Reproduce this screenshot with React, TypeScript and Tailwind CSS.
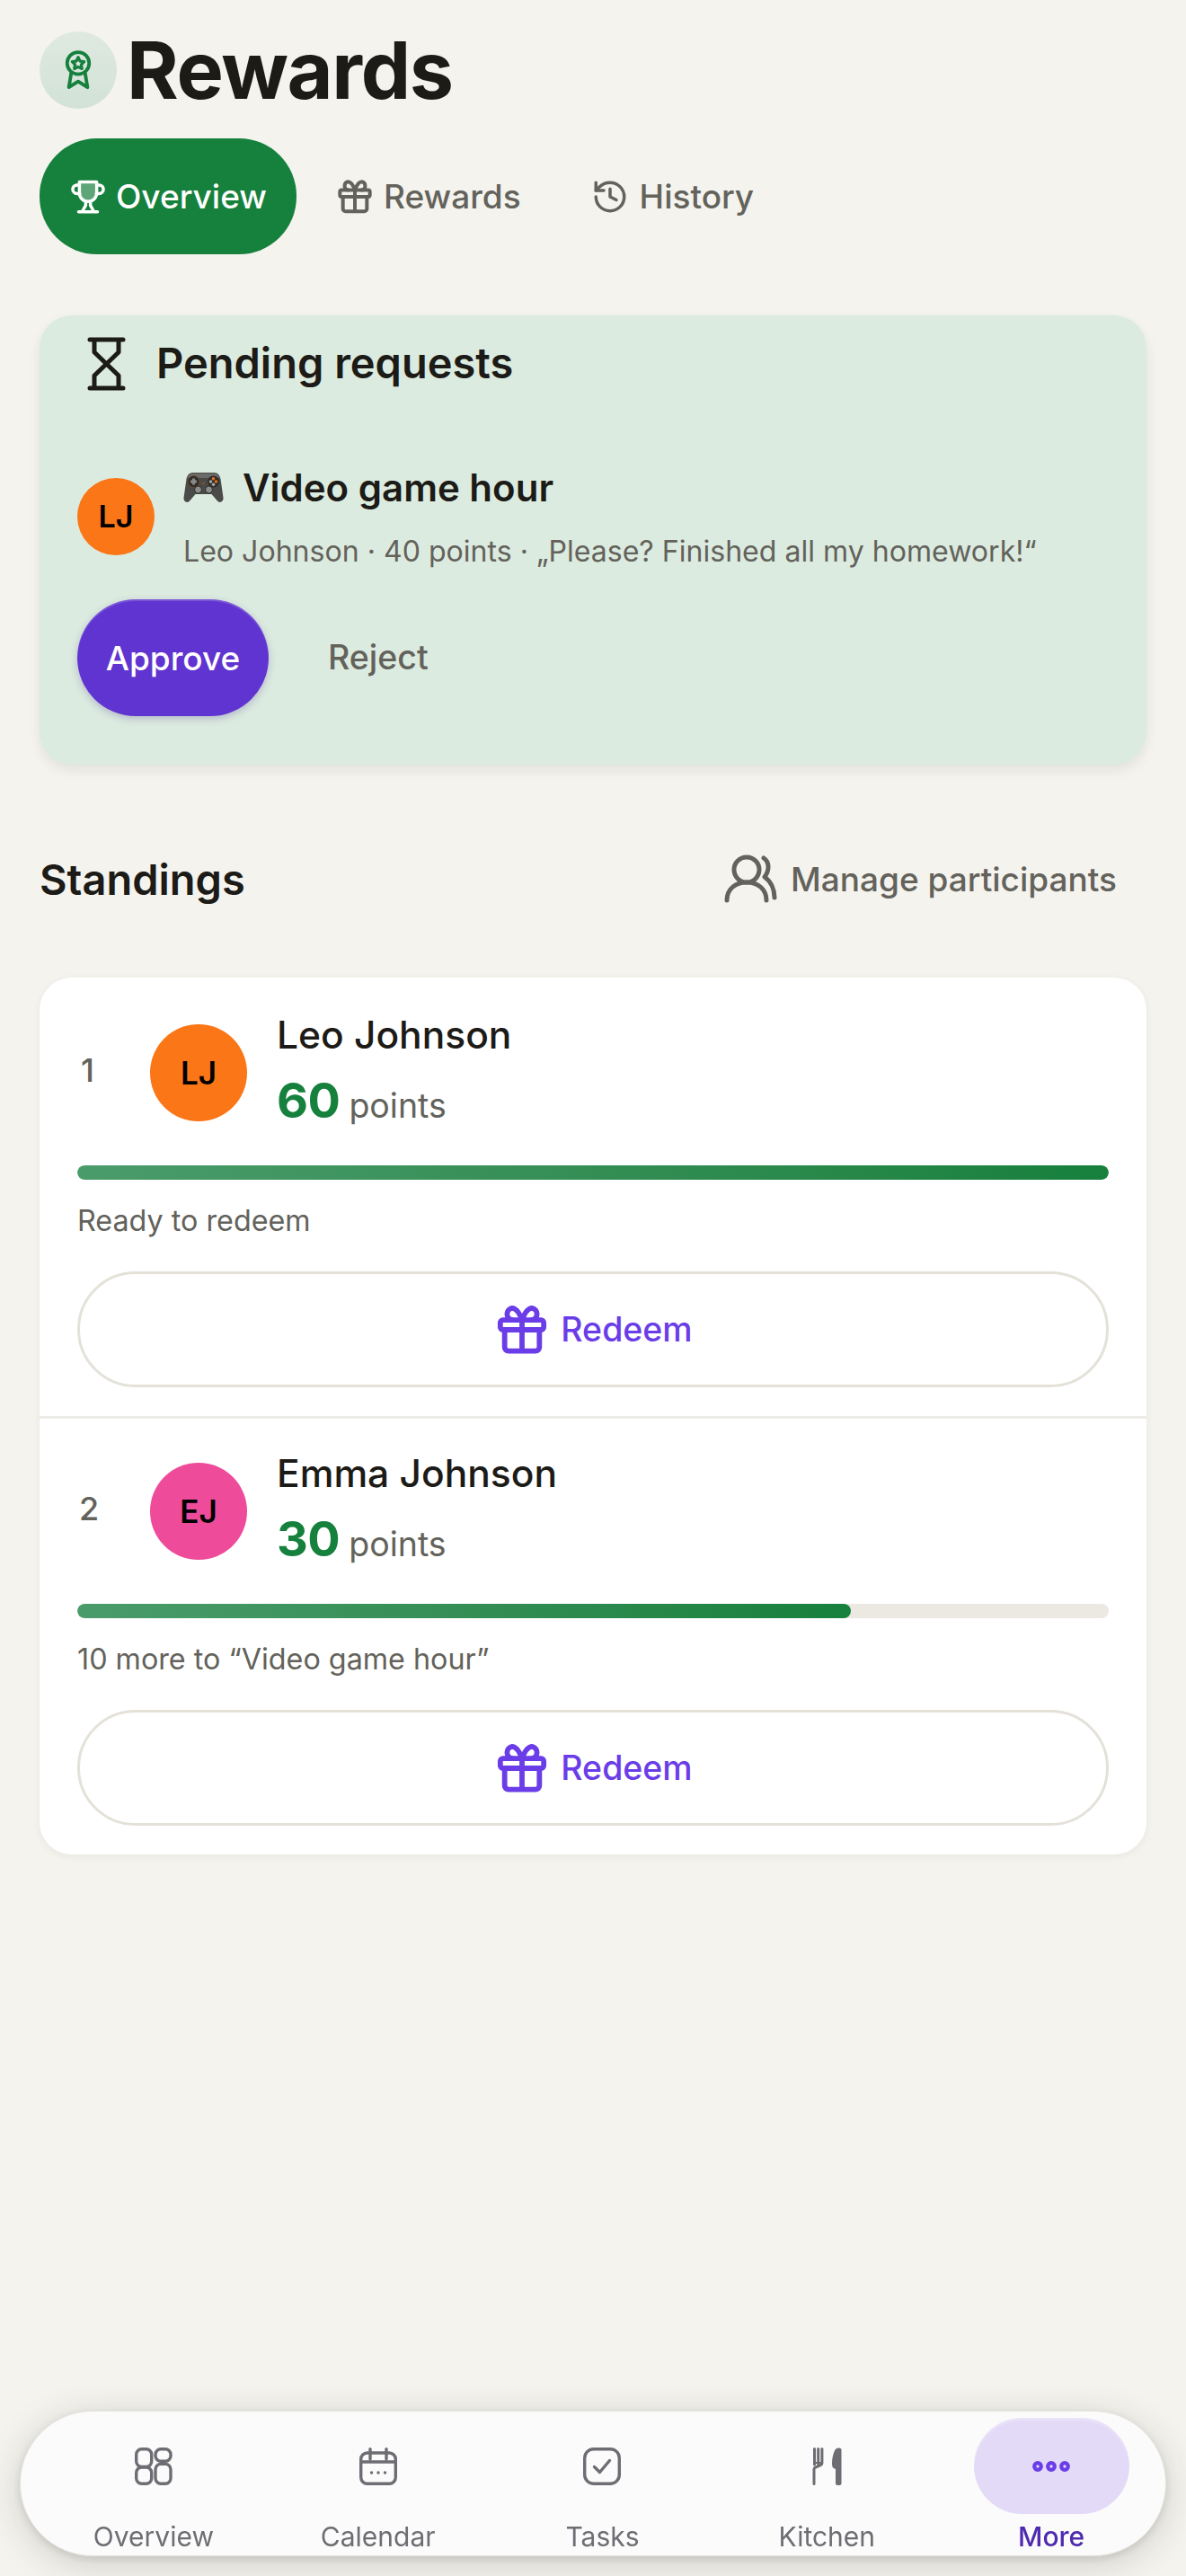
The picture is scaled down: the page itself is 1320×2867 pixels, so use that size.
import React from "react";

type IconProps = { className?: string };

function Award({ className }: IconProps) {
  return (
    <svg viewBox="0 0 24 24" fill="none" stroke="currentColor" strokeWidth="2" strokeLinecap="round" strokeLinejoin="round" className={className}>
      <circle cx="12" cy="8" r="6.4" />
      <path d="M12 4.6l1.1 2.2 2.4.3-1.700 1.700.4 2.400-2.200-1.100-2.200 1.100.4-2.400-1.700-1.700 2.400-.3z" strokeWidth="1.7" />
      <path d="M8 13.500L6.600 22 12 18.600 17.400 22 16 13.500" />
    </svg>
  );
}

function Trophy({ className }: IconProps) {
  return (
    <svg viewBox="0 0 24 24" fill="none" stroke="currentColor" strokeWidth="2" strokeLinecap="round" strokeLinejoin="round" className={className}>
      <path d="M6.500 2.500h11v7a5.500 5.500 0 0 1-11 0z" fill="currentColor" fillOpacity="0.3" />
      <path d="M6.500 4.500H5a2.500 2.500 0 0 0 0 5.500h1.700M17.500 4.500H19a2.500 2.500 0 0 1 0 5.500h-1.700" />
      <path d="M10.500 15v2.500L8.500 21M13.500 15v2.500l2 3.500M6 21.500h12" />
    </svg>
  );
}

function Gift({ className }: IconProps) {
  return (
    <svg viewBox="0 0 24 24" fill="none" stroke="currentColor" strokeWidth="2.4" strokeLinecap="round" strokeLinejoin="round" className={className}>
      <rect x="2" y="7.500" width="20" height="4.500" rx="1.200" />
      <path d="M4 12v8a1.800 1.800 0 0 0 1.800 1.800h12.400a1.800 1.800 0 0 0 1.800-1.800v-8M12 7.500v14.300" />
      <path d="M12 7.500C10.500 3.500 9 2 7.400 2a2.800 2.800 0 0 0 0 5.500M12 7.500C13.500 3.500 15 2 16.600 2a2.800 2.800 0 0 1 0 5.500" />
    </svg>
  );
}

function History({ className }: IconProps) {
  return (
    <svg viewBox="0 0 24 24" fill="none" stroke="currentColor" strokeWidth="2" strokeLinecap="round" strokeLinejoin="round" className={className}>
      <path d="M3 12a9 9 0 1 0 9-9 9.750 9.750 0 0 0-6.740 2.740L3 8" />
      <path d="M3 3v5h5" />
      <path d="M12 7v5l4 2" />
    </svg>
  );
}

function Hourglass({ className }: IconProps) {
  return (
    <svg viewBox="0 0 43 60" fill="none" stroke="currentColor" strokeWidth="5" strokeLinecap="round" strokeLinejoin="round" className={className}>
      <path d="M3 3h37M3 57h37" />
      <path d="M8 3v14l13.500 13L35 43v14M35 3v14L21.500 30 8 43v14" strokeLinecap="butt" />
    </svg>
  );
}

function Users({ className }: IconProps) {
  return (
    <svg viewBox="0 0 60 54" fill="none" stroke="currentColor" strokeWidth="5" strokeLinecap="round" strokeLinejoin="round" className={className}>
      <circle cx="25" cy="17" r="14" />
      <path d="M3 51c0-12 9-20 22-20s22 8 22 20" />
      <path d="M44 4c6 4 7 13 1 21 7 5 11 14 11 23" />
    </svg>
  );
}

function GridNav({ className }: IconProps) {
  return (
    <svg viewBox="0 0 42 42" fill="none" stroke="currentColor" strokeWidth="3.400" className={className}>
      <rect x="1.700" y="1.700" width="17" height="19.800" rx="6" />
      <rect x="1.700" y="22" width="17" height="18.300" rx="6" />
      <rect x="23" y="1.700" width="17" height="13.500" rx="6" />
      <rect x="23" y="18.400" width="17" height="21.900" rx="6" />
    </svg>
  );
}

function CalendarNav({ className }: IconProps) {
  return (
    <svg viewBox="0 0 42 42" fill="none" stroke="currentColor" strokeWidth="3.400" strokeLinecap="round" className={className}>
      <rect x="1.700" y="6" width="38.600" height="34.300" rx="7" />
      <path d="M1.700 16h38.600M12 1.700v11M30 1.700v11" />
      <path d="M13.500 28h.1M21 28h.1M28.500 28h.1" strokeWidth="3.400" />
    </svg>
  );
}

function TaskNav({ className }: IconProps) {
  return (
    <svg viewBox="0 0 42 42" fill="none" stroke="currentColor" strokeWidth="3.400" strokeLinecap="round" strokeLinejoin="round" className={className}>
      <rect x="1.700" y="1.700" width="38.600" height="38.600" rx="10" />
      <path d="M12.500 21.500l6 6 11-13" />
    </svg>
  );
}

function KitchenNav({ className }: IconProps) {
  return (
    <svg viewBox="0 0 33 42" fill="none" stroke="currentColor" strokeWidth="3" strokeLinecap="round" className={className}>
      <path d="M2.500 1.500V19M6.700 1.500V19M10.900 1.500V17.500a2 2 0 0 1-1.200 1.800l-6.500 3a2 2 0 0 0-1.200 1.800V40.500" />
      <path d="M2.500 16h8.400v2H2.500z" fill="currentColor" stroke="none" />
      <path d="M27 1c2.500-1 5.500-.6 5.500 1.500V40a2 2 0 0 1-2 2H28a2 2 0 0 1-2-2V24c-2.800-.6-4-2.500-4-5.500 0-7 2-15.500 5-17.500z" fill="currentColor" stroke="none" />
    </svg>
  );
}

function DotsNav({ className }: IconProps) {
  return (
    <svg viewBox="0 0 42 14" fill="none" stroke="currentColor" strokeWidth="4.200" className={className}>
      <circle cx="6" cy="7" r="3.800" />
      <circle cx="21" cy="7" r="3.800" />
      <circle cx="36" cy="7" r="3.800" />
    </svg>
  );
}

function Gamepad({ className }: IconProps) {
  return (
    <svg viewBox="0 0 44 36" className={className}>
      <path d="M10 1h24c4 0 6 3 7 7l3 21c.4 4-4 7-7 3l-6-7H13l-6 7c-3 4-7.400 1-7-3L3 8c1-4 3-7 7-7z" fill="#4a4a48" />
      <path d="M10 2h24c3 0 5 2 6 5H4c1-3 3-5 6-5z" fill="#6b6b69" />
      <circle cx="11" cy="11" r="6.500" fill="#2d2d2c" stroke="#7b4a22" strokeWidth="0.8" />
      <path d="M9.500 7.500h3v2h2v3h-2v2h-3v-2h-2v-3h2z" fill="#8a8a88" />
      <circle cx="33" cy="11" r="6.500" fill="#2d2d2c" />
      <circle cx="33" cy="7.800" r="1.800" fill="#e8701a" />
      <circle cx="36" cy="11" r="1.800" fill="#e8701a" />
      <circle cx="30" cy="11" r="1.800" fill="#a5a5a3" />
      <circle cx="33" cy="14.200" r="1.800" fill="#a5a5a3" />
      <circle cx="16" cy="20" r="4" fill="#8c8c8a" stroke="#2d2d2c" />
      <circle cx="28" cy="20" r="4" fill="#8c8c8a" stroke="#2d2d2c" />
      <circle cx="22" cy="13" r="1" fill="#b5581a" />
    </svg>
  );
}

function Tab({ icon, label, active }: { icon: React.ReactNode; label: string; active?: boolean }) {
  return (
    <div className={active ? "mr-[6px] flex h-[129px] items-center gap-[10px] rounded-[64px] bg-[#16803d] pl-[33px] pr-[33px] text-white" : "flex h-[129px] items-center gap-[12px] px-[39px] text-[#63625b]"}>
      {icon}
      <span className="text-[37px] font-medium leading-none">{label}</span>
    </div>
  );
}

function Avatar({ initials, color, size }: { initials: string; color: string; size: "sm" | "lg" }) {
  return (
    <div className={`${size === "sm" ? "h-[86px] w-[86px] text-[34px]" : "h-[108px] w-[108px] text-[35px]"} ${color} flex shrink-0 items-center justify-center rounded-full font-semibold leading-none text-black`}>
      {initials}
    </div>
  );
}

function Standing({ rank, initials, color, name, points, width, note, rankClass }: { rank: string; initials: string; color: string; name: string; points: string; width: string; note: string; rankClass: string }) {
  return (
    <div className="px-[42px]">
      <div className="flex items-start">
        <div className={`${rankClass} flex h-[104px] items-center text-[36px] font-medium leading-none text-[#63625b]`}>{rank}</div>
        <div className="pt-[1px]"><Avatar initials={initials} color={color} size="lg" /></div>
        <div className="ml-[33px] -mt-[17px]">
          <div className="flex h-[60px] items-center text-[42.500px] font-medium leading-none text-[#1c1b17]">{name}</div>
          <div className="mt-[7px] flex h-[72px] items-baseline gap-[10px]">
            <span className="text-[54px] font-bold leading-[72px] tracking-[-0.01em] text-[#16803d]">{points}</span>
            <span className="text-[37.500px] leading-none text-[#63625b]">points</span>
          </div>
        </div>
      </div>
      <div className="mt-[36px] h-[16px] overflow-hidden rounded-full bg-[#ebe9e2]">
        <div className={`${width} h-full rounded-full bg-gradient-to-r from-[#4a9c6b] to-[#16803d]`} />
      </div>
      <div className="mt-[28px] flex h-[36px] items-center text-[32.300px] leading-none text-[#63625b]">{note}</div>
      <div className="mt-[38px] flex h-[129px] items-center justify-center gap-[14px] rounded-[65px] border-[3px] border-[#e4e1d9] pl-[3px] text-[#6a3de8]">
        <Gift className="h-[58px] w-[58px]" />
        <span className="text-[37.500px] font-medium leading-none">Redeem</span>
      </div>
    </div>
  );
}

function NavItem({ icon, label, active }: { icon: React.ReactNode; label: string; active?: boolean }) {
  return (
    <div className="flex flex-1 flex-col items-center">
      <div className={active ? "flex h-[107px] w-[173px] items-center justify-center rounded-[54px] bg-[#e3daf7] text-[#6a3de8] shadow-[inset_0_3px_2px_rgba(255,255,255,0.25)]" : "flex h-[107px] w-[173px] items-center justify-center text-[#6d6d73]"}>
        {icon}
      </div>
      <span className={active ? "mt-[7px] text-[30px] font-medium leading-[36px] text-[#4f2ab0]" : "mt-[7px] text-[30px] leading-[36px] text-[#6d6d73]"}>{label}</span>
    </div>
  );
}

export default function App() {
  return (
    <div className="relative min-h-[2867px] bg-[#f4f3ee] font-['Inter',sans-serif]">
      <div className="px-[44px] pt-[35px]">
        <header className="flex items-center gap-[11px]">
          <div className="flex h-[86px] w-[86px] items-center justify-center rounded-full bg-gradient-to-b from-[#dfe9e1] to-[#d2e2d6] text-[#16803d]">
            <Award className="h-[46px] w-[46px]" />
          </div>
          <h1 className="text-[88px] font-bold leading-[86px] tracking-[-0.015em] text-[#1c1b17]">Rewards</h1>
        </header>

        <nav className="mt-[33px] flex items-center">
          <Tab active label="Overview" icon={<Trophy className="h-[42px] w-[42px]" />} />
          <Tab label="Rewards" icon={<Gift className="h-[40px] w-[40px]" />} />
          <Tab label="History" icon={<History className="h-[42px] w-[42px]" />} />
        </nav>

        <section className="mt-[68px] h-[500px] rounded-[36px] bg-[#dcebe0] pl-[42px] pr-[42px] shadow-[0_6px_14px_rgba(30,30,20,0.08)]">
          <div className="flex items-center pl-[11px] pt-[24px]">
            <Hourglass className="h-[60px] w-[43px] text-[#1c1b17]" />
            <h2 className="-mt-[4px] ml-[34px] text-[47px] font-semibold leading-none text-[#1c1b17]">Pending requests</h2>
          </div>
          <div className="mt-[78px] flex items-start">
            <div className="mt-[19px]"><Avatar initials="LJ" color="bg-[#fb7617]" size="sm" /></div>
            <div className="ml-[32px]">
              <div className="flex h-[60px] items-center gap-[21px]">
                <Gamepad className="h-[36px] w-[45px]" />
                <span className="text-[42px] font-semibold leading-none text-[#1c1b17]">Video game hour</span>
              </div>
              <div className="mt-[21px] text-[32.100px] leading-[40px] text-[#63625b]">Leo Johnson · 40 points · „Please? Finished all my homework!“</div>
            </div>
          </div>
          <div className="mt-[33px] flex items-center">
            <div className="flex h-[130px] w-[213px] items-center justify-center rounded-[65px] bg-[#6034d0] text-[37px] font-medium leading-none text-white shadow-[0_3px_8px_rgba(60,30,140,0.25),inset_0_2px_1px_rgba(255,255,255,0.18)]">Approve</div>
            <div className="ml-[66px] text-[37.500px] font-medium leading-none text-[#63625b]">Reject</div>
          </div>
        </section>

        <div className="mt-[91px] flex h-[72px] items-center justify-between pr-[33px]">
          <h2 className="text-[47px] font-semibold leading-none text-[#1c1b17]">Standings</h2>
          <div className="flex items-center gap-[14px] text-[#63625b]">
            <Users className="h-[54px] w-[60px]" />
            <span className="text-[37px] font-medium leading-none">Manage participants</span>
          </div>
        </div>

        <section className="mt-[74px] rounded-[36px] bg-white pt-[51px] pb-[32px] shadow-[0_2px_8px_rgba(30,30,20,0.06)]">
          <Standing rank="1" rankClass="w-[81px] pl-[4px]" initials="LJ" color="bg-[#fb7617]" name="Leo Johnson" points="60" width="w-full" note="Ready to redeem" />
          <div className="mt-[32px] mb-[48px] h-[3px] bg-[#eeece6]" />
          <Standing rank="2" rankClass="w-[81px] pl-[2px]" initials="EJ" color="bg-[#ee4b9b]" name="Emma Johnson" points="30" width="w-[75%]" note="10 more to “Video game hour”" />
        </section>
      </div>

      <div className="fixed bottom-[22px] left-[22px] right-[22px] flex h-[162px] items-start rounded-[81px] border border-[#e6e4de] bg-[#fbfbfb] pt-[7px] pl-[23px] pr-[2px] shadow-[0_8px_40px_rgba(40,40,30,0.18),0_3px_10px_rgba(40,40,30,0.12)]">
        <NavItem label="Overview" icon={<GridNav className="h-[42px] w-[42px]" />} />
        <NavItem label="Calendar" icon={<CalendarNav className="h-[42px] w-[42px]" />} />
        <NavItem label="Tasks" icon={<TaskNav className="h-[42px] w-[42px]" />} />
        <NavItem label="Kitchen" icon={<KitchenNav className="h-[42px] w-[33px]" />} />
        <NavItem active label="More" icon={<DotsNav className="h-[14px] w-[42px]" />} />
      </div>
    </div>
  );
}
